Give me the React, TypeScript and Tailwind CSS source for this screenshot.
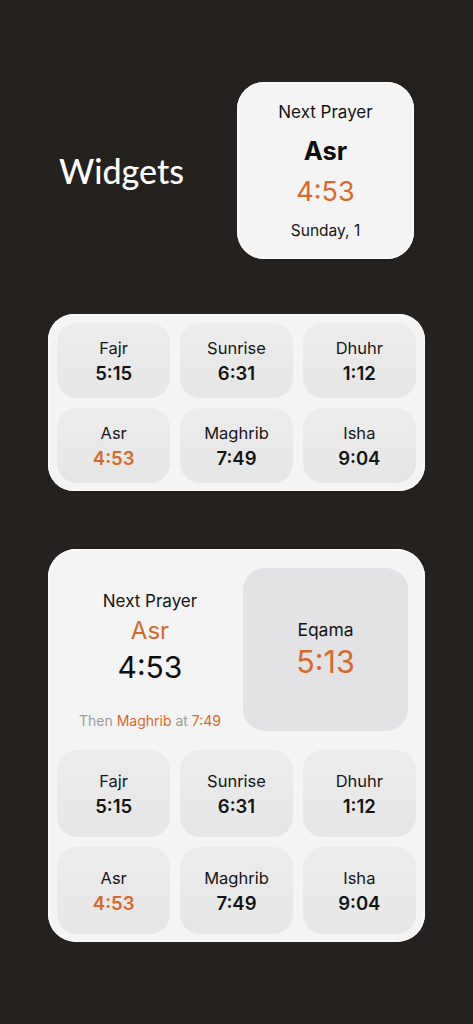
import React from "react";

const ORANGE = "text-[#d8692a]";

type P = { name: string; time: string; active?: boolean };
const prayers: P[] = [
  { name: "Fajr", time: "5:15" },
  { name: "Sunrise", time: "6:31" },
  { name: "Dhuhr", time: "1:12" },
  { name: "Asr", time: "4:53", active: true },
  { name: "Maghrib", time: "7:49" },
  { name: "Isha", time: "9:04" },
];

function Cell({ p, h }: { p: P; h: string }) {
  return (
    <div
      className={`${h} rounded-[20px] bg-gradient-to-b from-[#ececec] to-[#e6e6e6] flex flex-col items-center justify-center gap-[2px]`}
    >
      <div className="text-[16.5px] leading-[22px] text-[#161616]">{p.name}</div>
      <div
        className={`text-[18.5px] leading-[24px] font-semibold ${
          p.active ? ORANGE : "text-[#141414]"
        }`}
      >
        {p.time}
      </div>
    </div>
  );
}

function Grid({ h }: { h: string }) {
  return (
    <div className="grid grid-cols-3 gap-[10px] gap-x-[9.5px]">
      {prayers.map((p) => (
        <Cell key={p.name} p={p} h={h} />
      ))}
    </div>
  );
}

export default function App() {
  return (
    <div
      className="min-h-[1024px] w-full bg-[#25211f] px-[48px] pt-[82px] pb-[82px]"
      style={{ fontFamily: "Inter, 'Noto Sans', sans-serif" }}
    >
      {/* top row */}
      <div className="flex items-center justify-between pl-[11px] pr-[11px]">
        <div
          className="text-white text-[34px] leading-[40px] font-medium"
          style={{ fontFamily: "Lato, sans-serif" }}
        >
          Widgets
        </div>
        <div className="w-[177px] h-[177px] rounded-[27px] bg-[#f4f4f4] flex flex-col items-center shadow-[inset_0_0_0_1.5px_#fbfbfb]">
          <div className="mt-[19px] text-[17px] leading-[22px] text-[#141414]">Next Prayer</div>
          <div className="mt-[13px] text-[25.5px] leading-[30px] font-bold text-[#0e0e0e]">Asr</div>
          <div className={`mt-[10px] text-[27px] leading-[32px] ${ORANGE}`}>4:53</div>
          <div className="mt-[13px] text-[15.5px] leading-[20px] text-[#141414]">Sunday, 1</div>
        </div>
      </div>

      {/* medium widget */}
      <div className="mt-[55px] rounded-[26px] bg-[#f4f4f4] px-[9px] pt-[9px] pb-[8px] shadow-[inset_0_0_0_1.5px_#fbfbfb]">
        <Grid h="h-[75px]" />
      </div>

      {/* large widget */}
      <div className="mt-[58px] rounded-[28px] bg-[#f4f4f4] px-[9px] pt-[19px] pb-[8px] shadow-[inset_0_0_0_1.5px_#fbfbfb]">
        <div className="flex pr-[8px]">
          <div className="flex-1 flex flex-col items-center">
            <div className="mt-[22px] text-[17px] leading-[22px] text-[#141414]">Next Prayer</div>
            <div className={`mt-[4px] text-[24px] leading-[30px] ${ORANGE}`}>Asr</div>
            <div className="mt-[3px] text-[30px] leading-[36px] text-[#0e0e0e]">4:53</div>
            <div className="mt-[27px] text-[14px] leading-[18px] text-[#9c9c9c]">
              Then <span className={ORANGE}>Maghrib</span> at <span className={ORANGE}>7:49</span>
            </div>
          </div>
          <div className="w-[165px] h-[163px] rounded-[22px] bg-[#e3e3e5] flex flex-col items-center justify-center gap-[2px]">
            <div className="text-[17.5px] leading-[22px] text-[#141414]">Eqama</div>
            <div className={`text-[30.5px] leading-[38px] ${ORANGE}`}>5:13</div>
          </div>
        </div>
        <div className="mt-[19px]">
          <Grid h="h-[87px]" />
        </div>
      </div>
    </div>
  );
}
